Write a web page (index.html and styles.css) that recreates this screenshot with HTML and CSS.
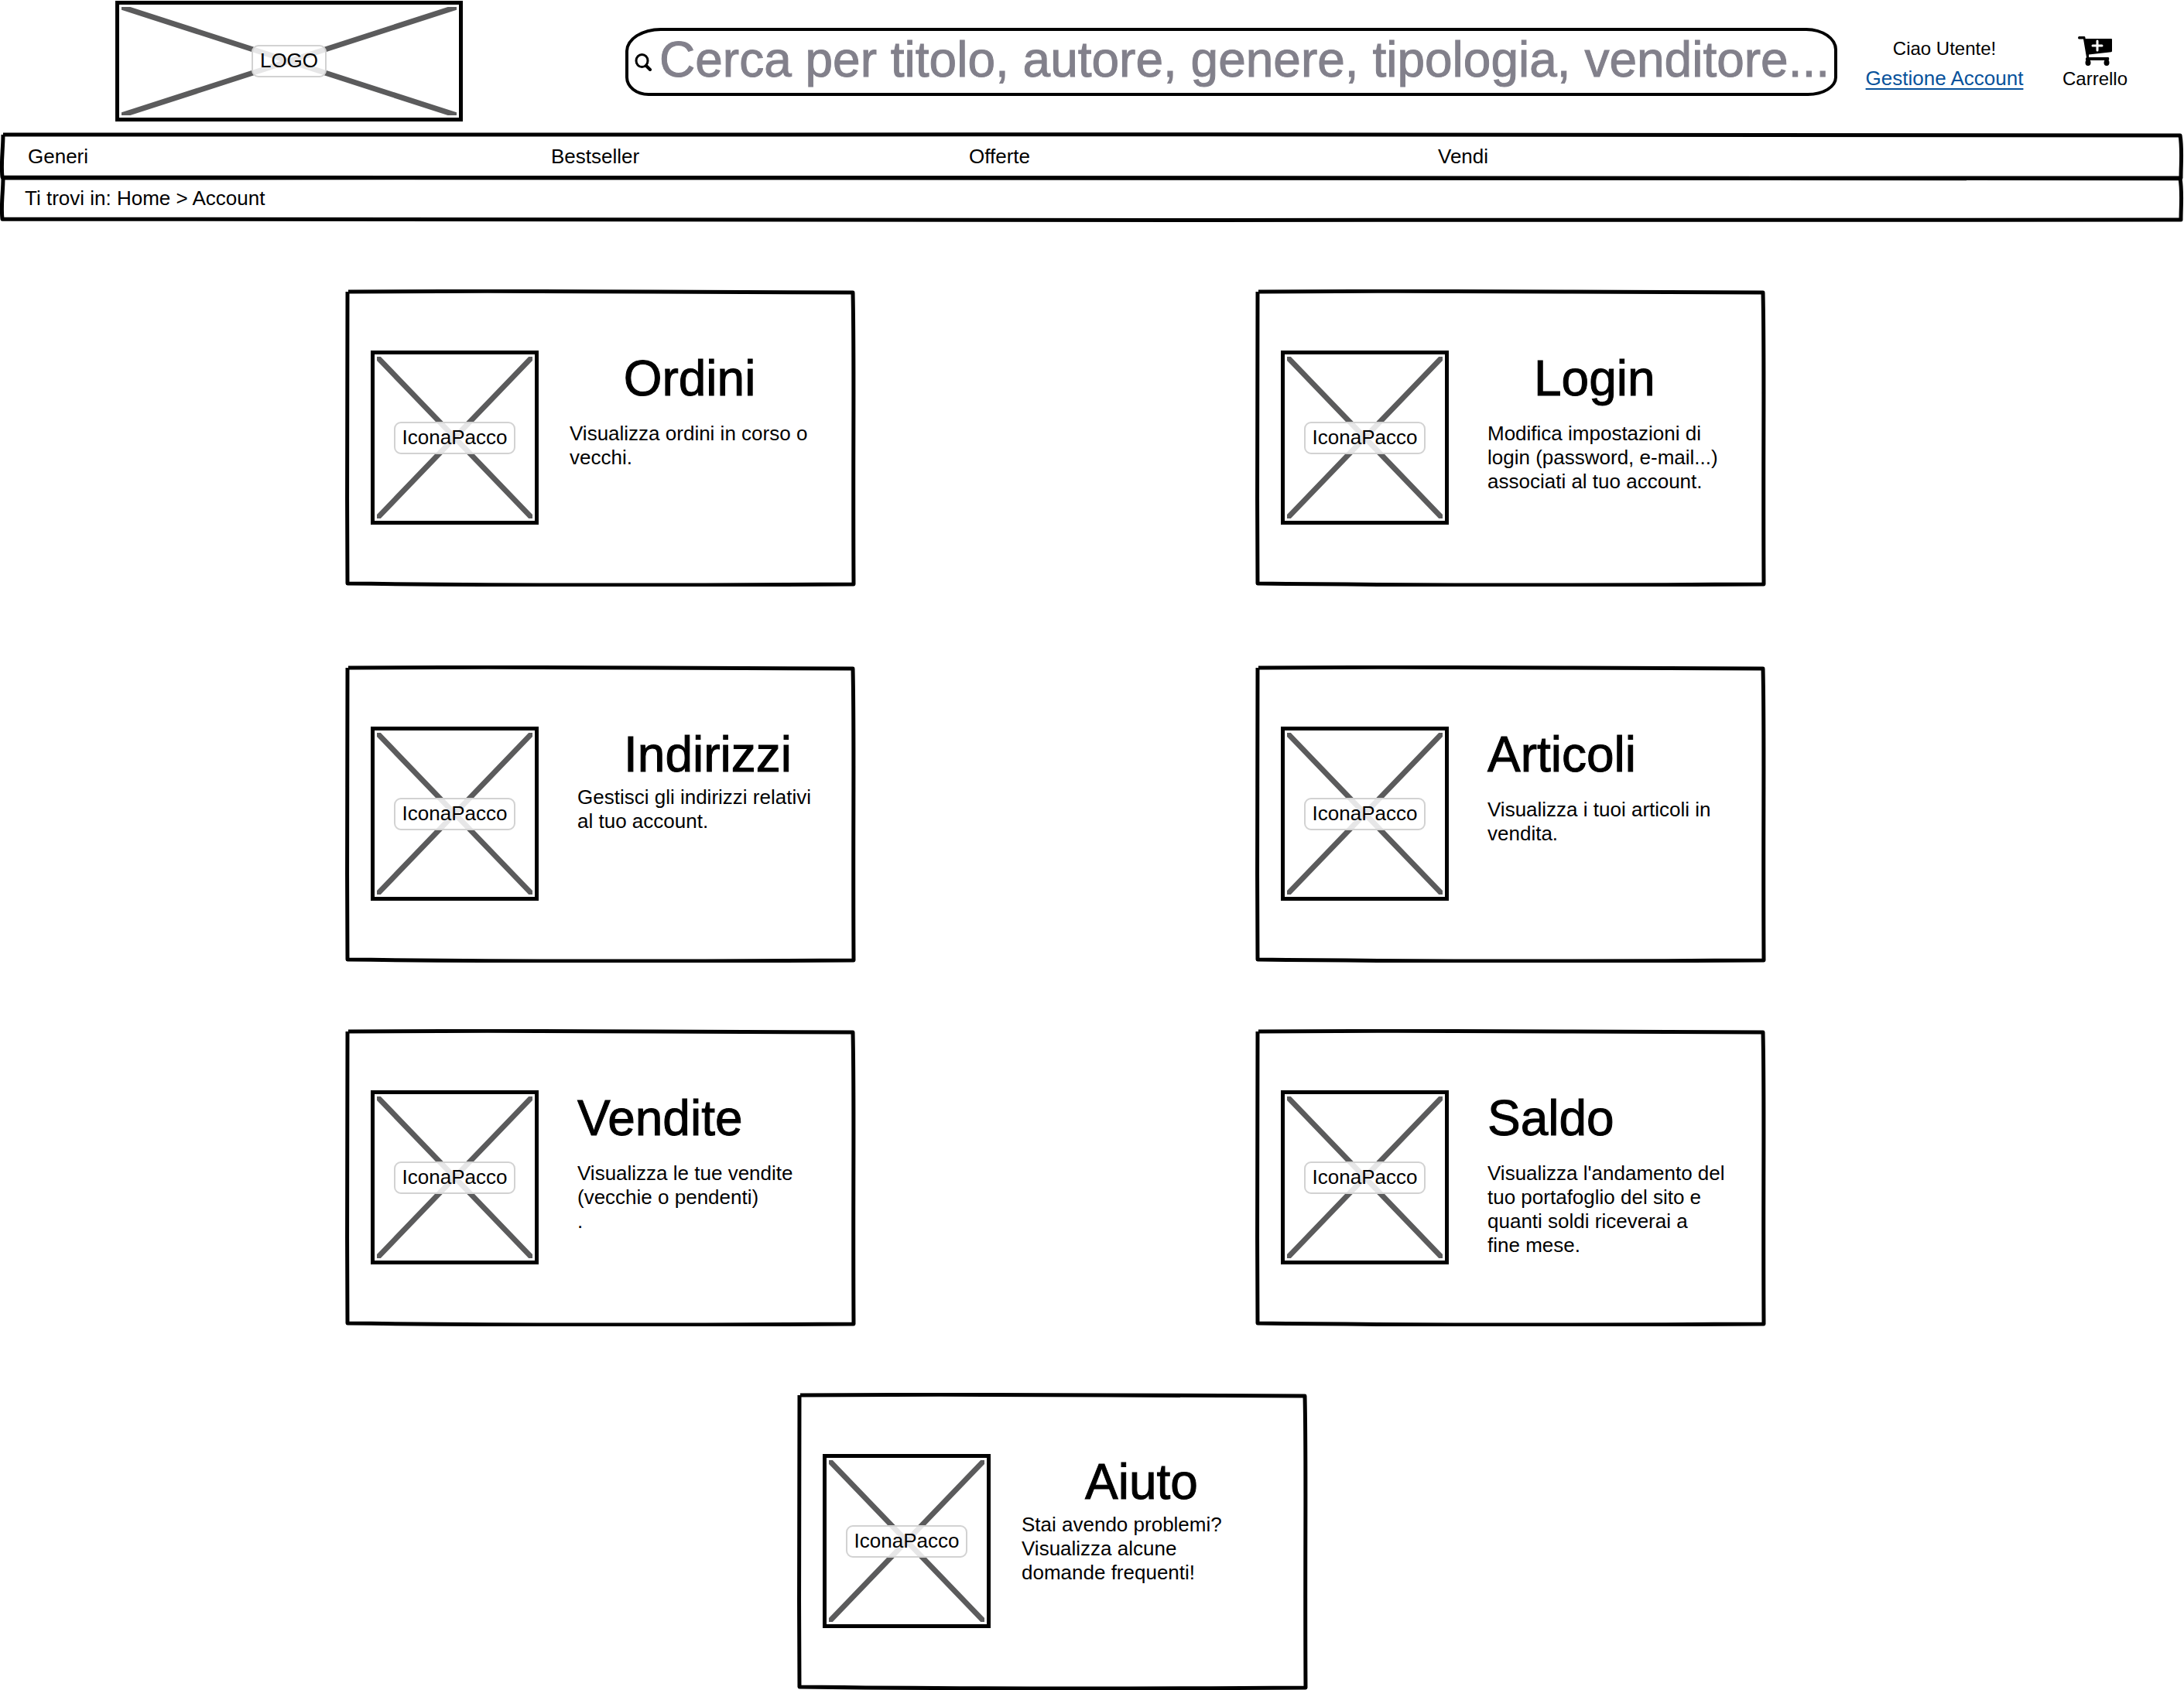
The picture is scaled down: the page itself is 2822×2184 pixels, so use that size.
FILE: index.html
```html
<!DOCTYPE html>
<html lang="it">
<head>
<meta charset="utf-8">
<meta name="viewport" content="width=device-width, initial-scale=1">
<title>Account</title>
<link rel="stylesheet" href="styles.css">
</head>
<body>
<svg class="defs" aria-hidden="true">
  <symbol id="card-frame" viewBox="0 0 660 384" preserveAspectRatio="none">
    <path d="M4 3C120 2 300 2 400 3S600 4 656 4C658 90 656 200 657 381C500 382 250 383 3 380C2 250 3 100 3 3"/>
  </symbol>
  <symbol id="bar-frame" viewBox="0 0 2822 62" preserveAspectRatio="none">
    <path d="M4 3C900 2 1900 3 2817 4C2820 22 2818 40 2818 59C1900 60 900 59 3 58C1 40 4 22 4 3"/>
  </symbol>
  <symbol id="cross" viewBox="0 0 100 100" preserveAspectRatio="none">
    <path d="M0 0L100 100M100 0L0 100"/>
  </symbol>
</svg>

<header class="header">
  <a class="thumb logo" href="#">
    <svg class="cross" aria-hidden="true"><use href="#cross" width="100%" height="100%"/></svg>
    <span class="thumb-label">LOGO</span>
  </a>
  <form class="search" role="search">
    <button class="search-button" type="button" aria-label="Cerca">
      <svg width="24" height="24" viewBox="0 0 24 24" fill="none" stroke="#000" stroke-width="3" stroke-linecap="round" aria-hidden="true">
        <ellipse cx="9.500" cy="10.500" rx="7.500" ry="8"/>
        <path d="M15 17L20 22" stroke-width="4"/>
      </svg>
    </button>
    <input class="search-input" type="text" aria-label="Cerca nel sito" placeholder="Cerca per titolo, autore, genere, tipologia, venditore...">
  </form>
  <div class="account">
    <span class="greeting">Ciao Utente!</span>
    <a class="account-link" href="#">Gestione Account</a>
  </div>
  <a class="cart" href="#">
    <svg width="44" height="38" viewBox="0 0 44 38" aria-hidden="true">
      <path d="M1 0H8.500Q9.500 0 9.700 3H43Q44 3 44 4V19Q44 20 43 20.200L14 23.600V27H39.500Q41 28.800 39.500 31H10.500Q9 29.500 11 27L7 3.600H1Q-1 1.800 1 0Z"/>
      <ellipse cx="13" cy="34" rx="3.500" ry="4"/>
      <ellipse cx="37" cy="34" rx="3.500" ry="4"/>
      <path d="M25 6V18M19 12H31" stroke="#fff" stroke-width="3" stroke-linecap="round"/>
    </svg>
    <span>Carrello</span>
  </a>
</header>

<nav class="bar nav" aria-label="Principale">
  <svg class="frame" aria-hidden="true"><use href="#bar-frame" width="100%" height="100%"/></svg>
  <a href="#">Generi</a>
  <a href="#">Bestseller</a>
  <a href="#">Offerte</a>
  <a href="#">Vendi</a>
</nav>
<nav class="bar crumbs" aria-label="Percorso">
  <svg class="frame" aria-hidden="true"><use href="#bar-frame" width="100%" height="100%"/></svg>
  <span>Ti trovi in: <a href="#">Home</a> &gt; <a href="#">Account</a></span>
</nav>

<main class="main">
  <section class="row row-first">
    <article class="card near">
      <svg class="frame" aria-hidden="true"><use href="#card-frame" width="100%" height="100%"/></svg>
      <div class="thumb"><svg class="cross" aria-hidden="true"><use href="#cross" width="100%" height="100%"/></svg><span class="thumb-label">IconaPacco</span></div>
      <div class="card-body">
        <h2 class="title centered">Ordini</h2>
        <p class="text">Visualizza ordini in corso o vecchi.</p>
      </div>
    </article>
    <article class="card">
      <svg class="frame" aria-hidden="true"><use href="#card-frame" width="100%" height="100%"/></svg>
      <div class="thumb"><svg class="cross" aria-hidden="true"><use href="#cross" width="100%" height="100%"/></svg><span class="thumb-label">IconaPacco</span></div>
      <div class="card-body">
        <h2 class="title indented">Login</h2>
        <p class="text">Modifica impostazioni di login (password, e-mail...) associati al tuo account.</p>
      </div>
    </article>
  </section>

  <section class="row">
    <article class="card">
      <svg class="frame" aria-hidden="true"><use href="#card-frame" width="100%" height="100%"/></svg>
      <div class="thumb"><svg class="cross" aria-hidden="true"><use href="#cross" width="100%" height="100%"/></svg><span class="thumb-label">IconaPacco</span></div>
      <div class="card-body tight">
        <h2 class="title indented">Indirizzi</h2>
        <p class="text">Gestisci gli indirizzi relativi al tuo account.</p>
      </div>
    </article>
    <article class="card">
      <svg class="frame" aria-hidden="true"><use href="#card-frame" width="100%" height="100%"/></svg>
      <div class="thumb"><svg class="cross" aria-hidden="true"><use href="#cross" width="100%" height="100%"/></svg><span class="thumb-label">IconaPacco</span></div>
      <div class="card-body">
        <h2 class="title">Articoli</h2>
        <p class="text">Visualizza i tuoi articoli in vendita.</p>
      </div>
    </article>
  </section>

  <section class="row">
    <article class="card">
      <svg class="frame" aria-hidden="true"><use href="#card-frame" width="100%" height="100%"/></svg>
      <div class="thumb"><svg class="cross" aria-hidden="true"><use href="#cross" width="100%" height="100%"/></svg><span class="thumb-label">IconaPacco</span></div>
      <div class="card-body">
        <h2 class="title">Vendite</h2>
        <p class="text">Visualizza le tue vendite (vecchie o pendenti)<br>.</p>
      </div>
    </article>
    <article class="card">
      <svg class="frame" aria-hidden="true"><use href="#card-frame" width="100%" height="100%"/></svg>
      <div class="thumb"><svg class="cross" aria-hidden="true"><use href="#cross" width="100%" height="100%"/></svg><span class="thumb-label">IconaPacco</span></div>
      <div class="card-body">
        <h2 class="title">Saldo</h2>
        <p class="text">Visualizza l'andamento del tuo portafoglio del sito e quanti soldi riceverai a<br>fine mese.</p>
      </div>
    </article>
  </section>

  <section class="row row-single">
    <article class="card near">
      <svg class="frame" aria-hidden="true"><use href="#card-frame" width="100%" height="100%"/></svg>
      <div class="thumb"><svg class="cross" aria-hidden="true"><use href="#cross" width="100%" height="100%"/></svg><span class="thumb-label">IconaPacco</span></div>
      <div class="card-body tight">
        <h2 class="title centered">Aiuto</h2>
        <p class="text">Stai avendo problemi? Visualizza alcune domande frequenti!</p>
      </div>
    </article>
  </section>
</main>
</body>
</html>
```
FILE: styles.css
```css
* {
  box-sizing: border-box;
}

body {
  margin: 0;
  background: #fff;
  color: #000;
  font-family: "Liberation Sans", Arial, sans-serif;
  font-size: 26px;
  line-height: 31px;
}

a {
  color: inherit;
  text-decoration: none;
}

.defs {
  position: absolute;
  width: 0;
  height: 0;
}

/* Hand-drawn outlines stretched over their box */
.frame {
  position: absolute;
  inset: 0;
  width: 100%;
  height: 100%;
  pointer-events: none;
  fill: none;
  stroke: #000;
  stroke-width: 5px;
  stroke-linejoin: round;
}

#card-frame path,
#bar-frame path,
#cross path {
  vector-effect: non-scaling-stroke;
}

/* Image placeholder */
.thumb {
  position: relative;
  display: grid;
  place-items: center;
  flex: none;
  width: 217px;
  height: 225px;
  border: 5px solid #000;
}

.cross {
  position: absolute;
  inset: 3px;
  width: calc(100% - 6px);
  height: calc(100% - 6px);
  fill: none;
  stroke: #5b5b5c;
  stroke-width: 7px;
}

.thumb-label {
  position: relative;
  padding: 3px 9px 4px;
  border: 2px solid #d2d2d2;
  border-radius: 9px;
  background: rgba(255, 255, 255, 0.85);
}

/* Header */
.header {
  display: flex;
  align-items: center;
  padding: 1px 73px 14px 149px;
}

.logo {
  width: 449px;
  height: 156px;
}

.search {
  display: flex;
  flex: 1;
  align-items: center;
  min-width: 0;
  height: 88px;
  margin: 2px 33px 0 210px;
  padding-left: 8px;
  border: 4px solid #000;
  border-radius: 46px 40px 38px 30px / 30px 28px 24px 24px;
}

.search-button {
  display: flex;
  flex: none;
  padding: 0;
  border: 0;
  background: none;
}

.search-input {
  flex: 1;
  min-width: 0;
  height: 80px;
  padding: 0 0 6px 8px;
  border: 0;
  outline: 0;
  background: none;
  color: #000;
  font: inherit;
  font-size: 64px;
}

.search-input::placeholder {
  color: #82808b;
  opacity: 1;
  -webkit-text-stroke: 1px #82808b;
}

.account {
  display: flex;
  flex: none;
  flex-direction: column;
  align-items: center;
  width: 211px;
  padding-top: 6px;
  line-height: 38px;
}

.greeting {
  font-size: 24px;
}

.account-link {
  color: #08529b;
  text-decoration: underline;
  text-decoration-thickness: 2px;
  text-decoration-skip-ink: none;
  text-underline-offset: 4px;
  white-space: nowrap;
}

.cart {
  display: flex;
  flex: none;
  flex-direction: column;
  align-items: center;
  gap: 3px;
  width: 84px;
  margin-left: 47px;
  padding-top: 4px;
  font-size: 24px;
  line-height: 28px;
}

/* Navigation bars */
.bar {
  position: relative;
  align-items: center;
}

.nav {
  display: grid;
  grid-template-columns: 676fr 540fr 606fr 964fr;
  height: 62px;
  padding-left: 36px;
}

.crumbs {
  display: flex;
  height: 60px;
  margin-top: -6px;
  padding: 0 32px 2px;
}

/* Card rows */
.main {
  display: grid;
  gap: 86px;
  padding-top: 87px;
}

.row {
  display: grid;
  grid-template-columns: 446fr 660fr 516fr 660fr 540fr;
}

.row-first {
  margin-bottom: 16px;
}

.row .card:first-of-type {
  grid-column: 2;
}

.row .card:nth-of-type(2) {
  grid-column: 4;
}

.row-single {
  grid-template-columns: 1030fr 660fr 1132fr;
}

.card {
  position: relative;
  display: flex;
  gap: 50px;
  padding: 79px 0 80px 33px;
}

.card.near {
  gap: 40px;
}

.card-body {
  flex: 0 1 310px;
  min-width: 0;
}

.title {
  margin: 0 0 20px;
  font-size: 64px;
  font-weight: 400;
  line-height: 72px;
  -webkit-text-stroke: 1px #000;
}

.tight .title {
  margin-bottom: 4px;
}

.centered {
  text-align: center;
}

.indented {
  padding-left: 60px;
}

.text {
  margin: 0;
}
```
